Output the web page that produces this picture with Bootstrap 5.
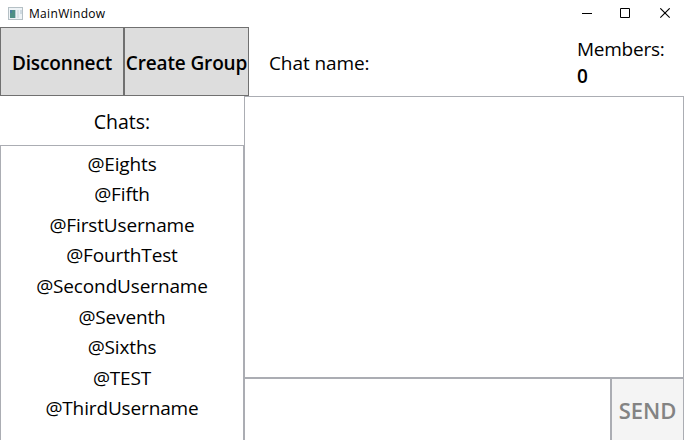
<!DOCTYPE html>
<html lang="en"><head><meta charset="utf-8"><title>MainWindow</title>
<link rel="stylesheet" href="https://cdn.jsdelivr.net/npm/bootstrap@5.3.0/dist/css/bootstrap.min.css">
<style>
html,body{height:100%}
body{font-family:"Open Sans","Noto Sans",sans-serif;color:#000;background:#fff;font-size:19px}
.titlebar{height:27px;font-size:12px}
.app-icon{margin-left:8px}
.caption-text{margin-left:6px;line-height:27px;letter-spacing:.33px}
.caption-btns{gap:28px;padding-right:13px}
.toolbar-row{height:69px}
.tool-btn,.tool-btn:hover{background:#ddd;border:1px solid #707070;border-radius:0;padding:3px 0 0;color:#000;font-weight:600;font-size:19px;letter-spacing:-.13px;width:125px;line-height:27px}
.tool-btn:first-child{width:124px}
.chat-title{margin-left:20px;padding-top:3px;letter-spacing:-.1px}
.members{width:107px;line-height:27px;letter-spacing:-.25px;padding-top:2px}
.sidebar{width:244px}
.chats-label{height:49px;font-size:19.5px;padding-top:2px}
.chat-list{border:1px solid #abadb3;border-bottom:0;padding-top:2.7px;letter-spacing:-.14px}
.chat-item{border:0;padding:0;line-height:30.6px;background:transparent;color:#000}
.messages{border:1px solid #abadb3}
.compose{height:62px}
.message-box{border:1px solid #abadb3;border-bottom:0;border-radius:0;resize:none;outline:0}
.send-btn,.send-btn:disabled{width:73px;border:1px solid #abadb3;border-bottom:0;border-radius:0;background:#f4f4f4;color:#838383;opacity:1;font-weight:600;font-size:22px;padding:2px 0 0}
</style></head>
<body class="d-flex flex-column overflow-hidden">
<header class="titlebar d-flex align-items-center flex-shrink-0">
<svg class="app-icon" width="15" height="14" shape-rendering="crispEdges"><rect x=".5" y=".5" width="14" height="12" fill="#eef3f6" stroke="#b5c0c5"/><rect x="2" y="3" width="6" height="8" fill="#b5cbd0"/><rect x="2" y="3" width="5" height="8" fill="#4f8f86"/><rect x="2" y="3" width="2" height="3" fill="#4a7f9c"/><rect x="9" y="3" width="2" height="8" fill="#dce3e8"/><rect x="12" y="3" width="2" height="4" fill="#cfdae1"/></svg>
<span class="caption-text me-auto">MainWindow</span>
<div class="caption-btns d-flex align-items-center">
<svg width="10" height="11"><path d="M0 5.5h10" stroke="#000"/></svg>
<svg width="10" height="11"><path d="M.5 .5h9v9h-9z" fill="none" stroke="#000"/></svg>
<svg width="13" height="11"><path d="M2.3 .3l9.4 9.4M11.7 .3L2.3 9.7" stroke="#000" stroke-width="1.1"/></svg>
</div>
</header>
<div class="toolbar-row d-flex flex-shrink-0">
<button type="button" class="btn tool-btn">Disconnect</button><button type="button" class="btn tool-btn text-nowrap">Create Group</button>
<div class="chat-title align-self-center me-auto">Chat name:</div>
<div class="members align-self-center">Members:<br><span class="fw-semibold">0</span></div>
</div>
<main class="d-flex flex-grow-1">
<aside class="sidebar d-flex flex-column">
<div class="chats-label d-flex align-items-center justify-content-center">Chats:</div>
<ul class="chat-list list-group rounded-0 text-center flex-grow-1 mb-0">
<li class="chat-item list-group-item">@Eights</li>
<li class="chat-item list-group-item">@Fifth</li>
<li class="chat-item list-group-item">@FirstUsername</li>
<li class="chat-item list-group-item">@FourthTest</li>
<li class="chat-item list-group-item">@SecondUsername</li>
<li class="chat-item list-group-item">@Seventh</li>
<li class="chat-item list-group-item">@Sixths</li>
<li class="chat-item list-group-item">@TEST</li>
<li class="chat-item list-group-item">@ThirdUsername</li>
</ul></aside>
<section class="d-flex flex-column flex-grow-1">
<div class="messages flex-grow-1"></div>
<div class="compose d-flex"><textarea class="message-box flex-grow-1"></textarea><button type="button" class="btn send-btn" disabled>SEND</button></div>
</section>
</main>
<script src="https://cdn.jsdelivr.net/npm/bootstrap@5.3.0/dist/js/bootstrap.bundle.min.js"></script>
</body></html>
